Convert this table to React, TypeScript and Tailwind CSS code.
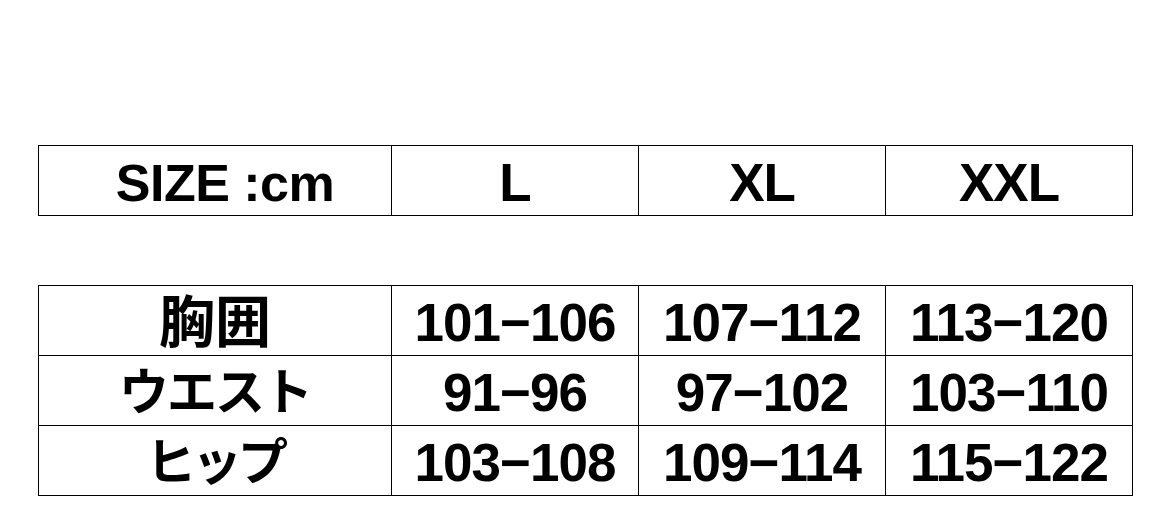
import * as React from "react";

const sizes = ["L", "XL", "XXL"];

// kanji runs bigger than the kana labels in the original sheet
const rows = [
    { label: "胸囲", labelClass: "text-[56px] tracking-normal", values: ["101−106", "107−112", "113−120"] },
    { label: "ウエスト", labelClass: "text-[50px] tracking-[-2px]", values: ["91−96", "97−102", "103−110"] },
    { label: "ヒップ", labelClass: "text-[50px] tracking-[-4px]", values: ["103−108", "109−114", "115−122"] },
];

const Cell: React.FC<{ children: React.ReactNode; className?: string }> = ({ children, className }) => (
    <div className="h-[70px] border-r border-b border-black flex items-center justify-center pt-1">
        <span className={"leading-none " + (className ?? "text-[53px] tracking-[-1px]")}>{children}</span>
    </div>
);

const App: React.FC = () => {
    return (
        <div
            className="w-[1172px] h-[516px] bg-white text-black font-bold pt-[145px] pl-[38px]"
            style={{ fontFamily: '"Liberation Sans", "Noto Sans CJK JP", sans-serif' }}
        >
            <div className="w-[1095px] grid grid-cols-[353px_247px_247px_247px] border-l border-t border-black">
                <div className="h-[70px] border-r border-b border-black flex items-center justify-center pt-1 pl-5">
                    <span className="text-[52px] leading-none tracking-[-0.5px]">SIZE :cm</span>
                </div>
                {sizes.map((s) => (
                    <Cell key={s}>{s}</Cell>
                ))}
            </div>

            <div className="mt-[69px] w-[1095px] grid grid-cols-[353px_247px_247px_247px] border-l border-t border-black">
                {rows.map((r) => (
                    <React.Fragment key={r.label}>
                        <Cell className={r.labelClass}>{r.label}</Cell>
                        {r.values.map((v) => (
                            <Cell key={v}>{v}</Cell>
                        ))}
                    </React.Fragment>
                ))}
            </div>
        </div>
    );
};

export default App;
